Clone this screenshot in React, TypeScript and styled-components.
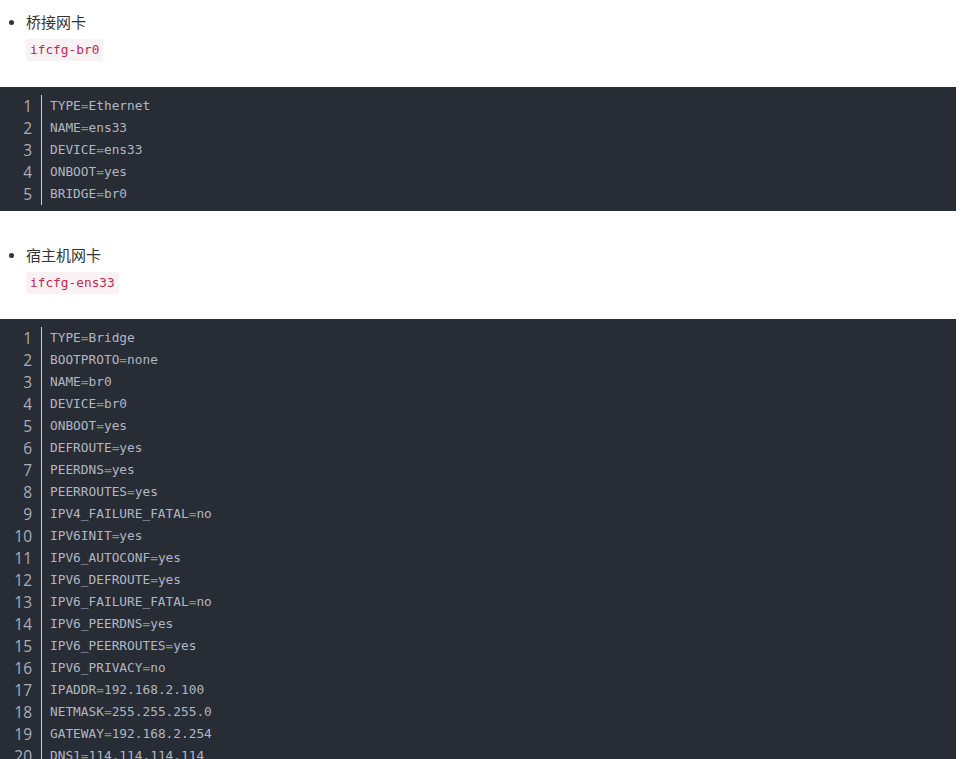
import React from "react";
import styled, { createGlobalStyle } from "styled-components";

const Global = createGlobalStyle`
  html, body { margin: 0; padding: 0; background: #fff; overflow: hidden; }
  body { font-family: "Open Sans", "Noto Sans CJK SC", sans-serif; color: #333; }
`;

const Page = styled.div`
  width: 956px;
  display: flex;
  flex-direction: column;
`;

const List = styled.ul<{ $top: number }>`
  margin: 0;
  padding: ${(p) => p.$top}px 0 0 26px;
  list-style: disc;
`;

const Item = styled.li`
  font-family: "Noto Sans CJK SC", sans-serif;
  font-size: 15px;
  line-height: 24px;
  color: #333;
  &::marker { font-size: 13px; }
`;

const InlineCode = styled.code`
  display: inline-block;
  margin-top: 5px;
  padding: 2px 4px;
  font-family: "DejaVu Sans Mono", monospace;
  font-size: 12.8px;
  line-height: 18px;
  color: #c7254e;
  background: #f9f2f4;
  border-radius: 3px;
`;

const Block = styled.pre<{ $mt: number }>`
  margin: ${(p) => p.$mt}px 0 0 0;
  padding: 8px 0 6px;
  background: #282c34;
  display: flex;
  flex-direction: column;
`;

const Row = styled.div`
  display: flex;
  align-items: stretch;
  height: 22px;
`;

const Num = styled.span`
  flex: none;
  box-sizing: border-box;
  width: 42px;
  padding: 1px 9px 0 0;
  text-align: right;
  font-family: "Open Sans", sans-serif;
  font-size: 15.5px;
  line-height: 21px;
  color: #a8afbb;
  border-right: 1px solid #c8ccd2;
`;

const Code = styled.span`
  padding-left: 8px;
  font-family: "DejaVu Sans Mono", monospace;
  font-size: 12.8px;
  line-height: 21px;
  color: #b0b7c3;
  white-space: pre;
`;

const Eq = styled.span`
  color: #7ea346;
`;

const CodeBlock = ({ lines, mt }: { lines: string[]; mt: number }) => (
  <Block $mt={mt}>
    {lines.map((l, i) => {
      const idx = l.indexOf("=");
      return (
        <Row key={i}>
          <Num>{i + 1}</Num>
          <Code>
            {l.slice(0, idx)}
            <Eq>=</Eq>
            {l.slice(idx + 1)}
          </Code>
        </Row>
      );
    })}
  </Block>
);

const br0 = ["TYPE=Ethernet", "NAME=ens33", "DEVICE=ens33", "ONBOOT=yes", "BRIDGE=br0"];
const ens = [
  "TYPE=Bridge",
  "BOOTPROTO=none",
  "NAME=br0",
  "DEVICE=br0",
  "ONBOOT=yes",
  "DEFROUTE=yes",
  "PEERDNS=yes",
  "PEERROUTES=yes",
  "IPV4_FAILURE_FATAL=no",
  "IPV6INIT=yes",
  "IPV6_AUTOCONF=yes",
  "IPV6_DEFROUTE=yes",
  "IPV6_FAILURE_FATAL=no",
  "IPV6_PEERDNS=yes",
  "IPV6_PEERROUTES=yes",
  "IPV6_PRIVACY=no",
  "IPADDR=192.168.2.100",
  "NETMASK=255.255.255.0",
  "GATEWAY=192.168.2.254",
  "DNS1=114.114.114.114",
];

export default function App() {
  return (
    <Page>
      <Global />
      <List $top={10}>
        <Item>
          桥接网卡
          <br />
          <InlineCode>ifcfg-br0</InlineCode>
        </Item>
      </List>
      <CodeBlock lines={br0} mt={26} />
      <List $top={32}>
        <Item>
          宿主机网卡
          <br />
          <InlineCode>ifcfg-ens33</InlineCode>
        </Item>
      </List>
      <CodeBlock lines={ens} mt={25} />
    </Page>
  );
}
